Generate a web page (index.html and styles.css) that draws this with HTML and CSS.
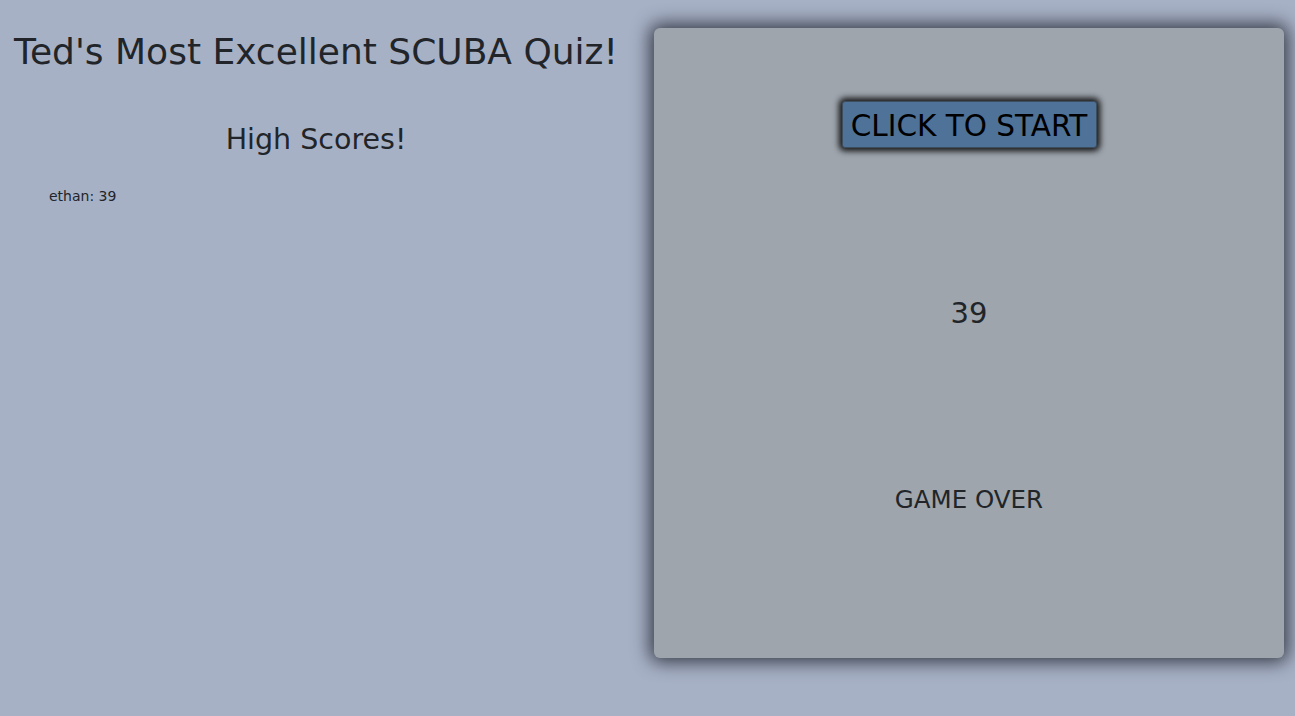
FILE: index.html
```html
<!DOCTYPE html>
<html>
<head>
<meta charset="utf-8">
<link rel="stylesheet" href="styles.css">
<title>SCUBA Quiz</title>
</head>
<body>
<div class="page">
  <div class="left">
    <h1 class="title">Ted's Most Excellent SCUBA Quiz!</h1>
    <h2 class="hs-title">High Scores!</h2>
    <ul class="scores">
      <li>ethan: 39</li>
    </ul>
  </div>
  <div class="card">
    <button class="start">CLICK TO START</button>
    <div class="score">39</div>
    <div class="over">GAME OVER</div>
  </div>
</div>
</body>
</html>
```
FILE: styles.css
```css
html, body {
  margin: 0;
  padding: 0;
}
body {
  background: #a7b1c6;
  color: #212529;
  font-family: "DejaVu Sans", Verdana, sans-serif;
  width: 1295px;
  height: 716px;
  overflow: hidden;
}
.page {
  display: flex;
  align-items: flex-start;
}
.left {
  width: 632px;
  display: flex;
  flex-direction: column;
  align-items: center;
}
.title {
  margin: 30px 0 0;
  font-size: 36px;
  font-weight: normal;
  line-height: 44px;
  white-space: nowrap;
}
.hs-title {
  margin: 48px 0 0;
  font-size: 28.5px;
  font-weight: normal;
  line-height: 36px;
}
.scores {
  align-self: stretch;
  list-style: none;
  margin: 28px 0 0;
  padding: 0 0 0 49px;
  font-size: 14px;
  line-height: 20px;
}
.card {
  margin: 28px 0 0 22px;
  width: 630px;
  height: 630px;
  box-sizing: border-box;
  background: #9ea5ad;
  border-radius: 6px;
  box-shadow: 0 0 18px 4px rgba(40, 45, 55, 0.9);
  display: flex;
  flex-direction: column;
  align-items: center;
  padding-top: 73px;
}
.start {
  font-family: inherit;
  font-size: 29.5px;
  line-height: 35px;
  color: #000;
  background: #4f7299;
  border: 1px solid #3d4d60;
  border-radius: 3px;
  padding: 6px 6px 2px;
  width: 255px;
  height: 47px;
  white-space: nowrap;
  box-shadow: 0 0 6px 3px rgba(0, 0, 0, 0.9);
  cursor: pointer;
}
.score {
  margin-top: 147px;
  font-size: 29px;
  line-height: 36px;
}
.over {
  margin-top: 154px;
  font-size: 24.5px;
  line-height: 30px;
}
```
